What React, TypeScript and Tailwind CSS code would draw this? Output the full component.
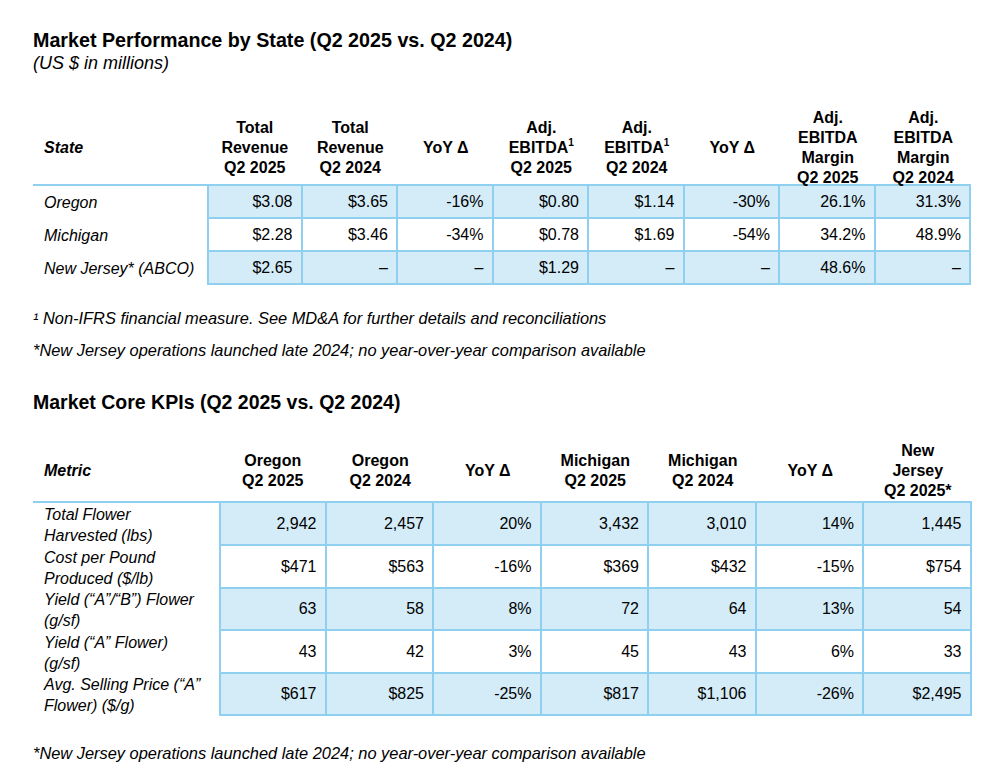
import React from "react";

const fill = "bg-[#d3ecf8]";

function Sup() {
  return <span className="relative -top-[7px] text-[10px] leading-none">1</span>;
}

const perfHeaders: React.ReactNode[] = [
  <>Total<br />Revenue<br />Q2 2025</>,
  <>Total<br />Revenue<br />Q2 2024</>,
  <>YoY Δ</>,
  <>Adj.<br />EBITDA<Sup /><br />Q2 2025</>,
  <>Adj.<br />EBITDA<Sup /><br />Q2 2024</>,
  <>YoY Δ</>,
  <>Adj.<br />EBITDA<br />Margin<br />Q2 2025</>,
  <>Adj.<br />EBITDA<br />Margin<br />Q2 2024</>,
];

const perfRows = [
  { label: "Oregon", values: ["$3.08", "$3.65", "-16%", "$0.80", "$1.14", "-30%", "26.1%", "31.3%"] },
  { label: "Michigan", values: ["$2.28", "$3.46", "-34%", "$0.78", "$1.69", "-54%", "34.2%", "48.9%"] },
  { label: "New Jersey* (ABCO)", values: ["$2.65", "–", "–", "$1.29", "–", "–", "48.6%", "–"] },
];

const kpiHeaders: React.ReactNode[] = [
  <>Oregon<br />Q2 2025</>,
  <>Oregon<br />Q2 2024</>,
  <>YoY Δ</>,
  <>Michigan<br />Q2 2025</>,
  <>Michigan<br />Q2 2024</>,
  <>YoY Δ</>,
  <>New<br />Jersey<br />Q2 2025*</>,
];

const kpiRows = [
  { label: ["Total Flower", "Harvested (lbs)"], h: "h-[43px]", values: ["2,942", "2,457", "20%", "3,432", "3,010", "14%", "1,445"] },
  { label: ["Cost per Pound", "Produced ($/lb)"], h: "h-[43px]", values: ["$471", "$563", "-16%", "$369", "$432", "-15%", "$754"] },
  { label: ["Yield (“A”/“B”) Flower", "(g/sf)"], h: "h-[42px]", values: ["63", "58", "8%", "72", "64", "13%", "54"] },
  { label: ["Yield (“A” Flower)", "(g/sf)"], h: "h-[43px]", values: ["43", "42", "3%", "45", "43", "6%", "33"] },
  { label: ["Avg. Selling Price (“A”", "Flower) ($/g)"], h: "h-[42px]", values: ["$617", "$825", "-25%", "$817", "$1,106", "-26%", "$2,495"] },
];

function PerformanceTable() {
  return (
    <div className="mt-[34px] w-[938px]">
      {/* header */}
      <div className="grid h-[78px] grid-cols-[174px_repeat(8,95.5px)] border-b-2 border-[#8fd0f1]">
        <div className="flex items-center pl-[11px] font-bold italic">State</div>
        {perfHeaders.map((h, i) => (
          <div key={i} className="flex items-center justify-center text-center font-bold leading-[20px]">
            <div>{h}</div>
          </div>
        ))}
      </div>
      {perfRows.map((row, r) => (
        <div key={row.label} className="grid h-[33px] grid-cols-[174px_repeat(8,95.5px)]">
          <div className="flex items-center pl-[11px] italic">{row.label}</div>
          {row.values.map((v, i) => (
            <div
              key={i}
              className={`flex items-center justify-end border-b-2 border-r-2 border-[#8fd0f1] pr-[8px] ${
                i === 0 ? "border-l-2" : ""
              } ${r % 2 === 0 ? fill : "bg-white"}`}
            >
              {v}
            </div>
          ))}
        </div>
      ))}
    </div>
  );
}

function KpiTable() {
  return (
    <div className="mt-[27px] w-[939px]">
      <div className="grid h-[62px] grid-cols-[186px_repeat(7,107.5px)] border-b-2 border-[#8fd0f1]">
        <div className="flex items-center pl-[11px] font-bold italic">Metric</div>
        {kpiHeaders.map((h, i) => (
          <div key={i} className="flex items-center justify-center text-center font-bold leading-[20px]">
            <div>{h}</div>
          </div>
        ))}
      </div>
      {kpiRows.map((row, r) => (
        <div key={row.label[0]} className={`grid grid-cols-[186px_repeat(7,107.5px)] ${row.h}`}>
          <div className="flex flex-col justify-center pl-[11px] italic leading-[21px]">
            <span>{row.label[0]}</span>
            <span>{row.label[1]}</span>
          </div>
          {row.values.map((v, i) => (
            <div
              key={i}
              className={`flex items-center justify-end border-b-2 border-r-2 border-[#8fd0f1] pr-[8px] ${
                i === 0 ? "border-l-2" : ""
              } ${r % 2 === 0 ? fill : "bg-white"}`}
            >
              {v}
            </div>
          ))}
        </div>
      ))}
    </div>
  );
}

export default function App() {
  return (
    <div className="h-[784px] w-[1000px] overflow-hidden bg-white pl-[33px] pt-[28px] font-['Liberation_Sans',Arial,sans-serif] text-[16px] text-black">
      <h1 className="text-[19.7px] font-bold leading-[24px]">
        Market Performance by State (Q2 2025 vs. Q2 2024)
      </h1>
      <p className="text-[18px] italic leading-[22px]">(US $ in millions)</p>

      <PerformanceTable />

      <p className="mt-[22px] text-[16.4px] italic leading-[22px]">
        ¹ Non-IFRS financial measure. See MD&amp;A for further details and reconciliations
      </p>
      <p className="mt-[10px] text-[16.4px] italic leading-[22px]">
        *New Jersey operations launched late 2024; no year-over-year comparison available
      </p>

      <h2 className="mt-[29px] text-[19.5px] font-bold leading-[24px]">
        Market Core KPIs (Q2 2025 vs. Q2 2024)
      </h2>

      <KpiTable />

      <p className="mt-[26px] text-[16.4px] italic leading-[22px]">
        *New Jersey operations launched late 2024; no year-over-year comparison available
      </p>
    </div>
  );
}
